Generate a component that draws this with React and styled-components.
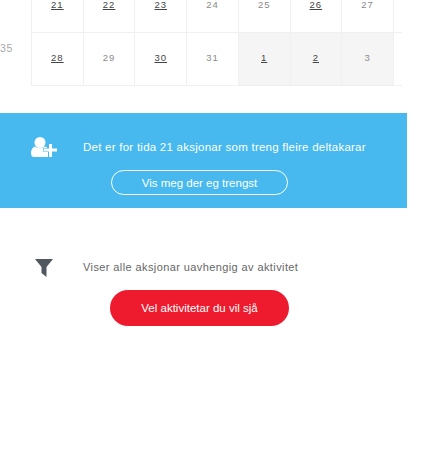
import React from "react";
import styled, { createGlobalStyle } from "styled-components";

const Global = createGlobalStyle`
  html, body { margin: 0; padding: 0; background: #fff; overflow: hidden; }
  body { font-family: "Liberation Sans", Arial, sans-serif; height: 466px; width: 432px; }
`;
const Page = styled.div`width: 407px; height: 466px; overflow: hidden;`;
const CalendarWrap = styled.div`
  display: flex; height: 113px; overflow: hidden; align-items: flex-start;
`;
const WeekCol = styled.div`
  width: 31px; flex: none; margin-top: 32px; height: 53px; font-size: 10.5px; color: #aaa;
  line-height: 32px; letter-spacing: .6px;
`;
const Grid = styled.div`
  display: grid; grid-template-columns: repeat(7, 51.71px) 8px; grid-template-rows: 33px 53px;
  border-left: 1px solid #f0f0f0; width: 370px;
`;
const Cell = styled.div`
  box-sizing: border-box; border-right: ${p => (p.$edge ? "0" : "1px solid #f0f0f0")}; border-bottom: 1px solid #f0f0f0;
  background: ${p => (p.$muted ? "#f5f5f5" : "#fff")};
  color: ${p => (p.$link ? "#444" : "#8a8a8a")};
  text-decoration: ${p => (p.$link ? "underline" : "none")};
  font-size: 9.5px; letter-spacing: 1px; text-align: center; line-height: 12px;
  padding-top: ${p => (p.$top ? "0" : "19px")};
  margin-top: ${p => (p.$top ? "-1px" : "0")};
`;
const Band = styled.section`
  height: 95px; background: #47b9ee; box-sizing: border-box; padding-top: 25px;
  display: grid; grid-template-columns: 83px 1fr; color: #fff;
`;
const BandIcon = styled.div`padding-left: 31px; height: 20px; margin-top: -1px;`;
const BandBody = styled.div`display: flex; flex-direction: column;`;
const BandText = styled.p`margin: 0; font-size: 11.5px; line-height: 18px; white-space: nowrap; letter-spacing: .25px;`;
const OutlineButton = styled.button`
  box-sizing: border-box; margin: 14px 0 0 28px; width: 177px; height: 25px; border-radius: 13px;
  border: 1px solid #fff; background: transparent; color: #fff; font: inherit; font-size: 11.5px; letter-spacing: 0; padding: 0;
`;
const FilterSection = styled.section`padding-top: 49px; display: grid; grid-template-columns: 83px 1fr;`;
const FilterIcon = styled.div`box-sizing: border-box; padding: 2px 0 0 35px; height: 20px;`;
const FilterText = styled.p`margin: 0; font-size: 11px; line-height: 20px; color: #666; letter-spacing: .4px; white-space: nowrap;`;
const RedButton = styled.button`
  box-sizing: border-box; display: block; margin: 13px 0 0 110px; width: 179px; height: 36px; border-radius: 18px; border: 0;
  background: #ee1a2d; color: #fff; font: inherit; font-size: 11.5px; padding: 0;
`;

const top = [["21",1],["22",1],["23",1],["24",0],["25",0],["26",1],["27",0]];
const bottom = [["28",1,0],["29",0,0],["30",1,0],["31",0,0],["1",1,1],["2",1,1],["3",0,1]];

export default function App() {
  return (
    <Page>
      <Global />
      <CalendarWrap>
        <WeekCol>35</WeekCol>
        <Grid>
          {top.map(([t, l]) => <Cell key={t} $top $link={!!l}>{t}</Cell>)}
          <Cell $top $edge />
          {bottom.map(([t, l, m]) => <Cell key={t} $link={!!l} $muted={!!m}>{t}</Cell>)}
          <Cell $edge />
        </Grid>
      </CalendarWrap>
      <Band>
        <BandIcon>
          <svg width="26" height="20" viewBox="0 0 26 20" fill="#fff">
            <circle cx="9" cy="5.500" r="5.500" />
            <path d="M0 16c0-3.500 1.800-6 4-6.500 1.300 1 3 1.700 5 1.700s3.700-.7 5-1.700c1.200.3 2.200 1 3 2.500v8H3c-2 0-3-1.500-3-4z" />
            <path d="M18 7h3v4.500h5v3h-5V20h-3v-5.500h-5v-3h5z" stroke="#47b9ee" strokeWidth="1.200" paintOrder="stroke" />
          </svg>
        </BandIcon>
        <BandBody>
          <BandText>Det er for tida 21 aksjonar som treng fleire deltakarar</BandText>
          <OutlineButton>Vis meg der eg trengst</OutlineButton>
        </BandBody>
      </Band>
      <FilterSection>
        <FilterIcon>
          <svg width="18" height="18" viewBox="0 0 18 18" fill="#50575e">
            <path d="M0 0h18L11.500 8v10L6.500 14V8z" />
          </svg>
        </FilterIcon>
        <FilterText>Viser alle aksjonar uavhengig av aktivitet</FilterText>
      </FilterSection>
      <RedButton>Vel aktivitetar du vil sjå</RedButton>
    </Page>
  );
}
